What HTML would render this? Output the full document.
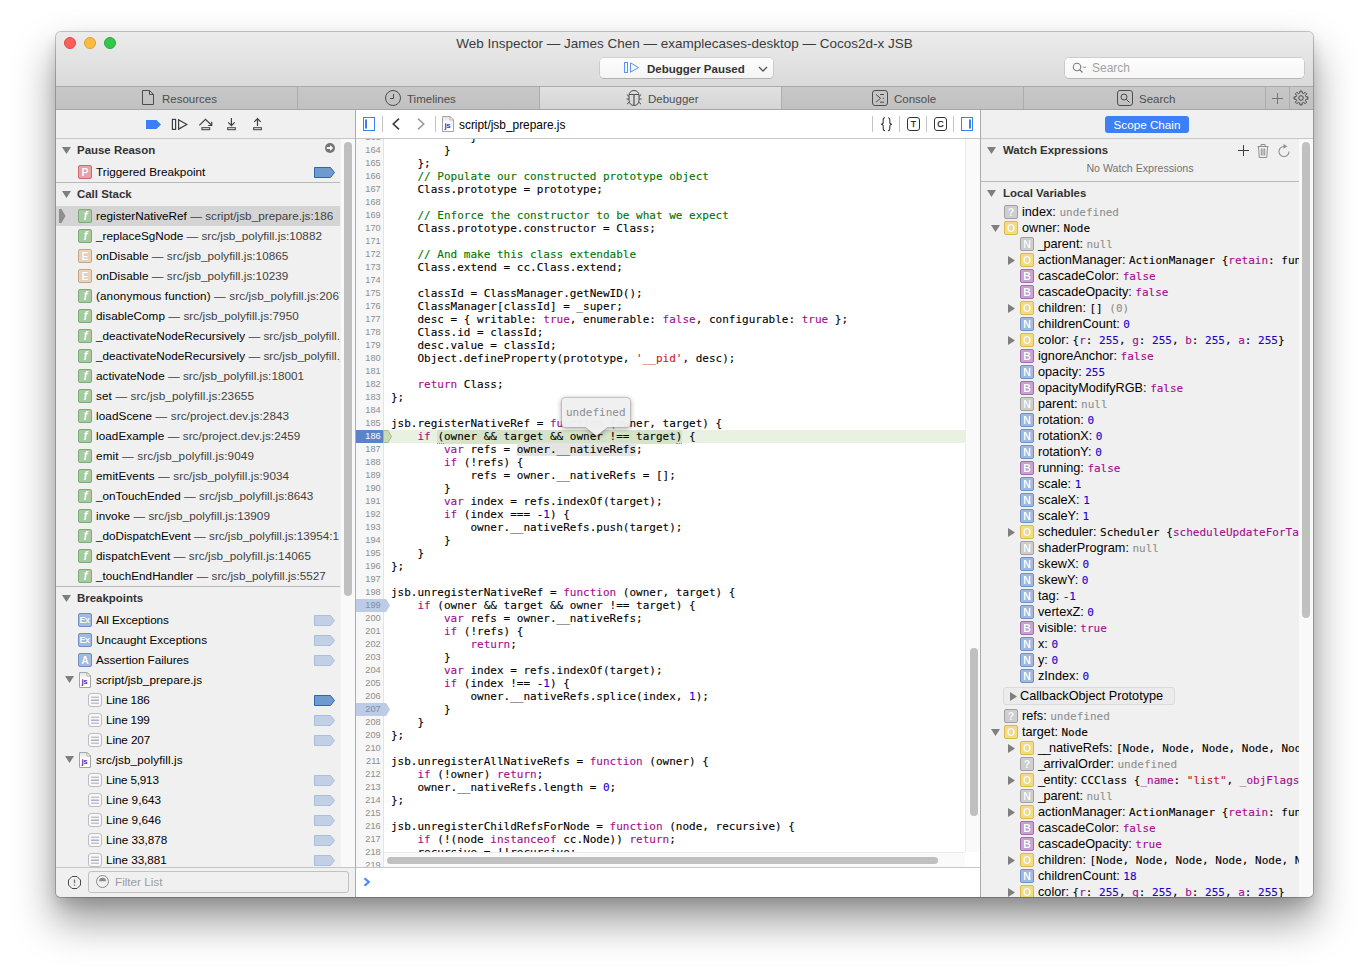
<!DOCTYPE html><html><head><meta charset="utf-8"><title>Web Inspector</title><style>
*{box-sizing:border-box;margin:0;padding:0}
html,body{width:1369px;height:977px;overflow:hidden;background:#fff}
body{font-family:"Liberation Sans",sans-serif;font-size:11.7px;color:#000;position:relative}
.mono{font-family:"DejaVu Sans Mono","Liberation Mono",monospace}
#win{position:absolute;left:56px;top:31px;width:1257px;height:866px}
#frame{position:absolute;left:0;top:1px;width:1257px;height:865px;border-radius:5px;background:#f0f0f0;
 box-shadow:0 0 0 1px rgba(0,0,0,.22),0 23px 40px 2px rgba(0,0,0,.39),0 8px 14px rgba(0,0,0,.13);}
#clip{position:absolute;left:0;top:1px;width:1257px;height:865px;border-radius:5px;overflow:hidden}
#in{position:absolute;left:0;top:-1px;width:1257px;height:866px}
.abs{position:absolute}
svg{position:absolute;overflow:visible}
/* title */
#title{left:0;top:0;width:1257px;height:55px;background:linear-gradient(#ececec,#dadada);}
#titleline{left:0;top:55px;width:1257px;height:1px;background:#a9a9a9}
.tl{position:absolute;top:6px;width:12px;height:12px;border-radius:6px}
#ttext{left:0;width:1257px;top:5px;height:16px;line-height:16px;text-align:center;font-size:13.5px;color:#3c3c3c;white-space:nowrap}
#dash{left:544px;top:27px;width:173px;height:20px;border-radius:4px;background:linear-gradient(#fdfdfd,#f4f4f4);box-shadow:0 0 0 .5px rgba(0,0,0,.18),0 1px 0 rgba(0,0,0,.12)}
#dashtext{left:591px;top:30px;font-size:11.5px;font-weight:bold;color:#333;line-height:16px;white-space:nowrap}
#searchbox{left:1009px;top:27px;width:239px;height:20px;border-radius:4px;background:linear-gradient(#fdfdfd,#f6f6f6);box-shadow:0 0 0 .5px rgba(0,0,0,.2),0 1px 0 rgba(0,0,0,.08)}
#searchph{left:1036px;top:29px;font-size:12px;color:#a3a3a3;line-height:16px}
/* tabs */
#tabs{left:0;top:56px;width:1257px;height:22px;background:linear-gradient(#c7c7c7,#c1c1c1)}
#tabline{left:0;top:78px;width:1257px;height:1px;background:#a6a6a6}
.tab{position:absolute;top:56px;height:22px;border-right:1px solid #adadad;font-size:11.5px;color:#4d4d4d;white-space:nowrap}
.tab.sel{background:linear-gradient(#e1e1e1,#d5d5d5)}
.tab span{position:absolute;top:4px;line-height:16px}
/* nav bars */
#lnav{left:0;top:79px;width:299px;height:28px;background:#f0f0f0}
#cnav{left:300px;top:79px;width:624px;height:28px;background:#fff}
#rnav{left:925px;top:79px;width:332px;height:28px;background:#f0f0f0}
#navline{left:0;top:107px;width:1257px;height:1px;background:#c6c6c6}
#vline1{left:299px;top:79px;width:1px;height:787px;background:#ababab}
#vline2{left:924px;top:79px;width:1px;height:787px;background:#ababab}
.ndiv{position:absolute;top:85px;width:1px;height:16px;background:#c4c4c4}
#crumb{left:403px;top:85.5px;font-size:11.9px;line-height:16px;color:#000;white-space:nowrap}
#scope{left:1049px;top:85px;width:84px;height:17px;border-radius:3px;background:#3d7ff6;color:#fff;font-size:11.7px;line-height:17px;text-align:center;white-space:nowrap}
/* left sidebar */
#left{left:0;top:108px;width:284px;height:728px;overflow:hidden}
#ltrack{left:285px;top:108px;width:14px;height:728px;background:#f9f9f9}
.thumb{position:absolute;border-radius:4px;background:#c0c0c0}
.sec{position:relative;height:23px;line-height:22px;font-weight:bold;font-size:11.45px;color:#333;padding-left:21px;white-space:nowrap}
.sec.bt{border-top:1px solid #b9b9b9;height:24px;line-height:23px}
#right .sec{height:22px}
#right .sec.bt{height:23px;line-height:22px}
.row{position:relative;height:20px;line-height:20px;white-space:nowrap;overflow:hidden;font-size:11.7px}
.row .t{position:absolute;left:40px;top:0;letter-spacing:0}
.row .t i{font-style:normal;color:#3f3f3f}
.row.selrow{background:#d4d4d4}
.ic{position:absolute;width:14px;height:14px;border-radius:2px;border:1px solid;text-align:center;font-size:10.5px;line-height:12px;color:#fff;font-weight:bold;overflow:hidden;text-shadow:0 0 1px rgba(0,0,0,.18)}
.row .ic{left:22px;top:3px}
.ic b{display:block}
.ic.f{background:#a6cba0;border-color:#7aad73}
.ic.f b{font-style:italic;font-size:12px;line-height:12px;text-indent:1px}
.ic.E{background:#e8d2bb;border-color:#c9a585}
.ic.P{background:#e9a3a8;border-color:#d0666f}
.ic.Ex{background:#a1badf;border-color:#6f8fc3;font-size:9px;letter-spacing:-.6px;text-indent:-1px}
.ic.A{background:#a1badf;border-color:#6f8fc3}
.ic.O{background:#f3dd83;border-color:#d9b94a}
.ic.N{background:#a1badf;border-color:#6f8fc3}
.ic.Ng{background:#cfcfcf;border-color:#9f9f9f}
.ic.B{background:#c9a3d1;border-color:#9d6ea8}
.ic.Q{background:#cfcfcf;border-color:#9f9f9f}
.bp{position:absolute;left:258px;top:5px}
#filterbar{left:0;top:836px;width:299px;height:30px;background:#f0f0f0;border-top:1px solid #c6c6c6}
#filter{left:32px;top:840px;width:261px;height:22px;border-radius:3px;background:#f0f0f0;border:1px solid #c2c2c2}
#filterph{left:59px;top:843px;font-size:11.700px;line-height:16px;color:#9d9d9d}
/* editor */
#ed{left:300px;top:108px;width:624px;height:728px;background:#fff;overflow:hidden}
#gutter{left:0;top:0;width:28px;height:728px;background:#f7f7f7;border-right:1px solid #e4e4e4}
.ln{position:absolute;left:0;width:24.7px;height:13px;line-height:13px;text-align:right;font-size:9.2px;color:#8e8e8e}
.cl{position:absolute;left:35px;height:13px;line-height:13px;font-size:11px;white-space:pre;color:#000;-webkit-text-stroke:.1px}
.dt{border-bottom:1px dotted #8c9f7c}
.k{color:#a30a8b}.c{color:#007400}.n{color:#1c00cf}.s{color:#c41a16}
#edvtrack{left:609px;top:0;width:15px;height:713px;background:#fafafa;border-left:1px solid #ececec}
#edhtrack{left:28px;top:713px;width:581px;height:15px;background:#fafafa;border-top:1px solid #ececec}
#corner{left:609px;top:713px;width:15px;height:15px;background:#fff}
#console{left:300px;top:836px;width:624px;height:30px;background:#fff;border-top:1px solid #c6c6c6}
/* right */
#right{left:925px;top:108px;width:318px;height:758px;overflow:hidden}
#rtrack{left:1243px;top:108px;width:14px;height:758px;background:#f9f9f9}
.rrow{position:relative;height:16px;line-height:16px;white-space:nowrap;font-size:12.7px}
.rrow .ic{top:1px}
.rrow .t{position:absolute;top:0}
.rrow .m{font-family:"DejaVu Sans Mono","Liberation Mono",monospace;font-size:11px;-webkit-text-stroke:.1px}
.g{color:#8f8f8f}
.rrow u{text-decoration:none;letter-spacing:-1.6px}
</style></head><body>
<div id="win"><div id="frame"></div><div id="clip"><div id="in">
<div id="title" class="abs"></div><div id="titleline" class="abs"></div>
<div class="tl" style="left:8px;background:#fc605b;border:.5px solid #de4a43"></div>
<div class="tl" style="left:28px;background:#fdbc40;border:.5px solid #de9f34"></div>
<div class="tl" style="left:48px;background:#34c84a;border:.5px solid #27aa35"></div>
<div id="ttext" class="abs">Web Inspector — James Chen — examplecases-desktop — Cocos2d-x JSB</div>
<div id="dash" class="abs"></div>
<svg width="16" height="12" viewBox="0 0 16 12" style="left:568px;top:31px"><rect x=".5" y=".5" width="3" height="10" fill="none" stroke="#5a96f7"/><path d="M6.5 .8L14.5 5.5L6.5 10.2Z" fill="none" stroke="#5a96f7"/></svg>
<div id="dashtext" class="abs">Debugger Paused</div>
<svg width="10" height="6" viewBox="0 0 10 6" style="left:702px;top:35px"><path d="M1 1L5 5L9 1" fill="none" stroke="#555" stroke-width="1.3"/></svg>
<div id="searchbox" class="abs"></div>
<svg width="16" height="12" viewBox="0 0 16 12" style="left:1016px;top:31px"><circle cx="5" cy="5" r="3.7" fill="none" stroke="#7a7a7a" stroke-width="1.1"/><path d="M7.7 7.7L10.5 10.5" stroke="#7a7a7a" stroke-width="1.2"/><path d="M11 4.5L12.5 6L14 4.5" fill="none" stroke="#7a7a7a" stroke-width="1"/></svg>
<div id="searchph" class="abs">Search</div>
<div id="tabs" class="abs"></div>
<div class="tab" style="left:0px;width:242px"><span style="left:106px">Resources</span></div>
<div class="tab" style="left:242px;width:242px"><span style="left:109px">Timelines</span></div>
<div class="tab sel" style="left:484px;width:242px"><span style="left:108px">Debugger</span></div>
<div class="tab" style="left:726px;width:242px"><span style="left:112px">Console</span></div>
<div class="tab" style="left:968px;width:242px"><span style="left:115px">Search</span></div>
<div class="tab" style="left:1210px;width:24px"></div><div class="tab" style="left:1234px;width:23px;border-right:0"></div>
<div id="tabline" class="abs"></div>
<svg width="12" height="15" viewBox="0 0 12 15" style="left:86px;top:59px"><path d="M.5 .5H7.5L11.5 4.5V14.5H.5Z" fill="none" stroke="#4d4d4d" stroke-width="1"/><path d="M7.5 .5V4.5H11.5" fill="none" stroke="#4d4d4d" stroke-width="1"/></svg>
<svg width="16" height="16" viewBox="0 0 16 16" style="left:329px;top:59px"><circle cx="8" cy="8" r="7.5" fill="none" stroke="#4d4d4d" stroke-width="1"/><path d="M8.5 4V8.5H5" fill="none" stroke="#4d4d4d" stroke-width="1"/></svg>
<svg width="16" height="18" viewBox="0 0 16 18" style="left:570px;top:58px"><g fill="none" stroke="#4d4d4d" stroke-width="1"><path d="M3 6.500C3 3.500 5 1.500 8 1.500C11 1.500 13 3.500 13 6.500V11C13 14.500 11 16.500 8 16.500C5 16.500 3 14.500 3 11ZM3.200 5.500H12.800M3 7.500L.8 5.500M13 7.500L15.200 5.500M3 10H.5M13 10H15.500M3.300 13L1 15.200M12.700 13L15 15.200"/><path d="M8 5.500V16.500" stroke="#777" stroke-width="1.700"/></g></svg>
<svg width="16" height="16" viewBox="0 0 16 16" style="left:816px;top:59px"><rect x=".5" y=".5" width="15" height="15" rx="2.500" fill="none" stroke="#4d4d4d" stroke-width="1"/><path d="M4 4.500L8.500 8.300L4 12.200M8 4.500H12M10.800 8.300H12M8 12.200H12" fill="none" stroke="#4d4d4d" stroke-width="1"/></svg>
<svg width="16" height="16" viewBox="0 0 16 16" style="left:1061px;top:59px"><rect x=".5" y=".5" width="15" height="15" rx="2.5" fill="none" stroke="#4d4d4d" stroke-width="1"/><circle cx="7" cy="7" r="3" fill="none" stroke="#4d4d4d" stroke-width="1"/><path d="M9.2 9.2L12.5 12.5" fill="none" stroke="#4d4d4d" stroke-width="1"/></svg>
<svg width="12" height="13" viewBox="0 0 12 13" style="left:1216px;top:61px"><path d="M5.500 1V12M0 6.500H11" stroke="#767676" stroke-width="1"/></svg>
<svg width="16" height="16" viewBox="-8 -8 16 16" style="left:1237.100px;top:59.200px"><g fill="none" stroke="#4a4a4a" stroke-width="1" stroke-linejoin="round"><circle r="2.300"/><path d="M-1.23 -4.95L-1.10 -6.91L1.10 -6.91L1.23 -4.95A5.10 5.10 0 0 1 2.63 -4.37L2.63 -4.37L4.11 -5.66L5.66 -4.11L4.37 -2.63A5.10 5.10 0 0 1 4.95 -1.23L4.95 -1.23L6.91 -1.10L6.91 1.10L4.95 1.23A5.10 5.10 0 0 1 4.37 2.63L4.37 2.63L5.66 4.11L4.11 5.66L2.63 4.37A5.10 5.10 0 0 1 1.23 4.95L1.23 4.95L1.10 6.91L-1.10 6.91L-1.23 4.95A5.10 5.10 0 0 1 -2.63 4.37L-2.63 4.37L-4.11 5.66L-5.66 4.11L-4.37 2.63A5.10 5.10 0 0 1 -4.95 1.23L-4.95 1.23L-6.91 1.10L-6.91 -1.10L-4.95 -1.23A5.10 5.10 0 0 1 -4.37 -2.63L-4.37 -2.63L-5.66 -4.11L-4.11 -5.66L-2.63 -4.37A5.10 5.10 0 0 1 -1.23 -4.95Z"/></g></svg>
<div id="lnav" class="abs"></div><div id="cnav" class="abs"></div><div id="rnav" class="abs"></div><div id="navline" class="abs"></div>
<svg width="299" height="28" viewBox="0 0 299 28" style="left:0;top:79px"><path d="M90 10H100.5L105 14.500L100.5 19H90Z" fill="#3a7ff6"/><g fill="none" stroke="#3f3f3f" stroke-width="1.2"><rect x="116.400" y="9.400" width="3.200" height="10"/><path d="M122.600 9.700L130.800 14.400L122.600 19.100Z"/><path d="M143.300 15.400L149.500 9.300L155.600 15.200M155.700 11.800V15.500H152.200"/><rect x="145.900" y="17.700" width="7.800" height="2" stroke-width="1"/><path d="M175.400 8V15.400M172.200 12.400L175.400 15.600L178.600 12.400"/><rect x="171.700" y="17.700" width="7.600" height="2" stroke-width="1"/><path d="M201.500 16V8.800M198.300 11.900L201.500 8.700L204.700 11.900"/><rect x="197.600" y="17.700" width="7.800" height="2" stroke-width="1"/></g></svg>
<svg width="12" height="14" viewBox="0 0 12 14" style="left:307px;top:86px"><rect x=".5" y=".5" width="11" height="13" fill="none" stroke="#3a80f6"/><path d="M3 2.500V11.500" stroke="#3a80f6" stroke-width="2"/></svg>
<div class="ndiv" style="left:326px"></div>
<svg width="8" height="12" viewBox="0 0 8 12" style="left:336px;top:87px"><path d="M7 .7L1.3 6L7 11.3" fill="none" stroke="#3b3b3b" stroke-width="1.6"/></svg>
<svg width="8" height="12" viewBox="0 0 8 12" style="left:361px;top:87px"><path d="M1 .7L6.7 6L1 11.3" fill="none" stroke="#9b9b9b" stroke-width="1.6"/></svg>
<div class="ndiv" style="left:379px"></div>
<div class="abs" style="left:0;top:83px;width:0;height:0"><svg width="13" height="16" viewBox="0 0 13 16" style="left:386px;top:2px"><defs><linearGradient id="jg" x1="0" y1="0" x2="0" y2="1"><stop offset="0" stop-color="#e2e2e2"/><stop offset=".45" stop-color="#fff"/></linearGradient></defs><path d="M.5 .5H8L11.5 4V15.5H.5Z" fill="url(#jg)" stroke="#a5a5a5" stroke-width="1"/><path d="M8 .5V4H11.5Z" fill="#fff" stroke="#a5a5a5" stroke-width=".8"/><text x="2.6" y="11.6" font-family="Liberation Sans,sans-serif" font-size="7.8" font-weight="bold" fill="#4a2cc8" letter-spacing="-.4">js</text></svg></div>
<div id="crumb" class="abs">script/jsb_prepare.js</div>
<div class="ndiv" style="left:816px"></div>
<svg width="13" height="16" viewBox="0 0 13 16" style="left:824px;top:85px"><path d="M5 1.700C3.400 1.700 3.200 2.500 3.200 3.700V6.200C3.200 7.500 2.400 8.200 1 8.200C2.400 8.200 3.200 8.900 3.200 10.200V12.700C3.200 13.900 3.400 14.700 5 14.700M8 1.700C9.600 1.700 9.800 2.500 9.800 3.700V6.200C9.800 7.500 10.600 8.200 12 8.200C10.600 8.200 9.800 8.900 9.800 10.200V12.700C9.800 13.900 9.600 14.700 8 14.700" fill="none" stroke="#383838" stroke-width="1.100"/></svg>
<div class="ndiv" style="left:843px"></div>
<svg width="13" height="14" viewBox="0 0 13 14" style="left:851px;top:86px"><rect x=".5" y=".5" width="12" height="13" rx="2.500" fill="none" stroke="#333"/><text x="6.500" y="10.200" text-anchor="middle" font-size="8.800" font-family="Liberation Sans,sans-serif" fill="#222" stroke="#222" stroke-width=".25">T</text></svg>
<div class="ndiv" style="left:870px"></div>
<svg width="13" height="14" viewBox="0 0 13 14" style="left:878px;top:86px"><rect x=".5" y=".5" width="12" height="13" rx="2.500" fill="none" stroke="#333"/><text x="6.500" y="10.200" text-anchor="middle" font-size="8.800" font-family="Liberation Sans,sans-serif" fill="#222" stroke="#222" stroke-width=".25">C</text></svg>
<div class="ndiv" style="left:897px"></div>
<svg width="12" height="14" viewBox="0 0 12 14" style="left:905px;top:86px"><rect x=".5" y=".5" width="11" height="13" fill="none" stroke="#3a80f6"/><path d="M9 2.500V11.500" stroke="#3a80f6" stroke-width="2"/></svg>
<div id="scope" class="abs">Scope Chain</div>
<div id="left" class="abs"><div class="sec"><svg width="9" height="7" viewBox="0 0 9 7" style="left:6px;top:8px"><path d="M0 0H9L4.5 7Z" fill="#7e7e7e"/></svg>Pause Reason<svg width="10" height="10" viewBox="0 0 10 10" style="left:269px;top:4.300px"><circle cx="5" cy="5" r="5" fill="#737373"/><path d="M1.800 4H5V2L8.300 5L5 8V6H1.800Z" fill="#f4f4f4"/></svg></div>
<div class="row"><span class="ic P"><b>P</b></span><span class="t" style="letter-spacing:0.034px;">Triggered Breakpoint</span><svg class="bp" width="21" height="11" viewBox="0 0 21 11"><path d="M.5 .5H16.500L20.500 5.500L16.500 10.500H.5Z" fill="#6e9bcf" stroke="#2f66b0" stroke-width="1"/></svg></div>
<div class="sec bt"><svg width="9" height="7" viewBox="0 0 9 7" style="left:6px;top:8px"><path d="M0 0H9L4.5 7Z" fill="#7e7e7e"/></svg>Call Stack</div>
<div class="row selrow"><svg width="7" height="14" viewBox="0 0 7 14" style="left:3px;top:3px"><path d="M0 0H2.5L6.5 7L2.5 14H0Z" fill="#8e8e8e"/></svg><span class="ic f"><b>f</b></span><span class="t" style="letter-spacing:0.035px;">registerNativeRef<i> — script/jsb_prepare.js:186</i></span></div>
<div class="row"><span class="ic f"><b>f</b></span><span class="t" style="letter-spacing:0.011px;">_replaceSgNode<i> — src/jsb_polyfill.js:10882</i></span></div>
<div class="row"><span class="ic E"><b>E</b></span><span class="t" style="letter-spacing:0.055px;">onDisable<i> — src/jsb_polyfill.js:10865</i></span></div>
<div class="row"><span class="ic E"><b>E</b></span><span class="t" style="letter-spacing:0.055px;">onDisable<i> — src/jsb_polyfill.js:10239</i></span></div>
<div class="row"><span class="ic f"><b>f</b></span><span class="t" style="letter-spacing:0.115px;">(anonymous function)<i> — src/jsb_polyfill.js:20671</i></span></div>
<div class="row"><span class="ic f"><b>f</b></span><span class="t" style="letter-spacing:0.071px;">disableComp<i> — src/jsb_polyfill.js:7950</i></span></div>
<div class="row"><span class="ic f"><b>f</b></span><span class="t" style="letter-spacing:0.037px;">_deactivateNodeRecursively<i> — src/jsb_polyfill.js:18040</i></span></div>
<div class="row"><span class="ic f"><b>f</b></span><span class="t" style="letter-spacing:0.037px;">_deactivateNodeRecursively<i> — src/jsb_polyfill.js:18046</i></span></div>
<div class="row"><span class="ic f"><b>f</b></span><span class="t" style="letter-spacing:0.037px;">activateNode<i> — src/jsb_polyfill.js:18001</i></span></div>
<div class="row"><span class="ic f"><b>f</b></span><span class="t" style="letter-spacing:0.133px;">set<i> — src/jsb_polyfill.js:23655</i></span></div>
<div class="row"><span class="ic f"><b>f</b></span><span class="t" style="letter-spacing:0.106px;">loadScene<i> — src/project.dev.js:2843</i></span></div>
<div class="row"><span class="ic f"><b>f</b></span><span class="t" style="letter-spacing:0.070px;">loadExample<i> — src/project.dev.js:2459</i></span></div>
<div class="row"><span class="ic f"><b>f</b></span><span class="t" style="letter-spacing:0.133px;">emit<i> — src/jsb_polyfill.js:9049</i></span></div>
<div class="row"><span class="ic f"><b>f</b></span><span class="t" style="letter-spacing:0.095px;">emitEvents<i> — src/jsb_polyfill.js:9034</i></span></div>
<div class="row"><span class="ic f"><b>f</b></span><span class="t" style="letter-spacing:0.026px;">_onTouchEnded<i> — src/jsb_polyfill.js:8643</i></span></div>
<div class="row"><span class="ic f"><b>f</b></span><span class="t" style="letter-spacing:0.054px;">invoke<i> — src/jsb_polyfill.js:13909</i></span></div>
<div class="row"><span class="ic f"><b>f</b></span><span class="t">_doDispatchEvent<i> — src/jsb_polyfill.js:13954:1</i></span></div>
<div class="row"><span class="ic f"><b>f</b></span><span class="t" style="letter-spacing:0.078px;">dispatchEvent<i> — src/jsb_polyfill.js:14065</i></span></div>
<div class="row"><span class="ic f"><b>f</b></span><span class="t" style="letter-spacing:0.028px;">_touchEndHandler<i> — src/jsb_polyfill.js:5527</i></span></div>
<div class="sec bt"><svg width="9" height="7" viewBox="0 0 9 7" style="left:6px;top:8px"><path d="M0 0H9L4.5 7Z" fill="#7e7e7e"/></svg>Breakpoints</div>
<div class="row"><span class="ic Ex"><b>Ex</b></span><span class="t" style="letter-spacing:-0.037px;">All Exceptions</span><svg class="bp" width="21" height="11" viewBox="0 0 21 11"><path d="M.5 .5H16.500L20.500 5.500L16.500 10.500H.5Z" fill="#c2d0e3" stroke="#a8bedd" stroke-width="1"/></svg></div>
<div class="row"><span class="ic Ex"><b>Ex</b></span><span class="t" style="letter-spacing:0.029px;">Uncaught Exceptions</span><svg class="bp" width="21" height="11" viewBox="0 0 21 11"><path d="M.5 .5H16.500L20.500 5.500L16.500 10.500H.5Z" fill="#c2d0e3" stroke="#a8bedd" stroke-width="1"/></svg></div>
<div class="row"><span class="ic A"><b>A</b></span><span class="t" style="letter-spacing:-0.036px;">Assertion Failures</span><svg class="bp" width="21" height="11" viewBox="0 0 21 11"><path d="M.5 .5H16.500L20.500 5.500L16.500 10.500H.5Z" fill="#c2d0e3" stroke="#a8bedd" stroke-width="1"/></svg></div>
<div class="row"><svg width="9" height="7" viewBox="0 0 9 7" style="left:9px;top:6px"><path d="M0 0H9L4.5 7Z" fill="#7e7e7e"/></svg><svg width="13" height="16" viewBox="0 0 13 16" style="left:23px;top:2px"><defs><linearGradient id="jg" x1="0" y1="0" x2="0" y2="1"><stop offset="0" stop-color="#e2e2e2"/><stop offset=".45" stop-color="#fff"/></linearGradient></defs><path d="M.5 .5H8L11.5 4V15.5H.5Z" fill="url(#jg)" stroke="#a5a5a5" stroke-width="1"/><path d="M8 .5V4H11.5Z" fill="#fff" stroke="#a5a5a5" stroke-width=".8"/><text x="2.6" y="11.6" font-family="Liberation Sans,sans-serif" font-size="7.8" font-weight="bold" fill="#4a2cc8" letter-spacing="-.4">js</text></svg><span class="t" style="letter-spacing:0.076px;">script/jsb_prepare.js</span></div>
<div class="row"><svg width="14" height="14" viewBox="0 0 14 14" style="left:32px;top:3px"><rect x=".5" y=".5" width="13" height="13" rx="2.5" fill="#f7f7f7" stroke="#bdbdbd"/><path d="M3 4.25H11M3 10.25H11" stroke="#c6c6c6" stroke-width="1.5"/><path d="M3 7.25H11" stroke="#aaaadc" stroke-width="1.5"/></svg><span class="t" style="left:50px;letter-spacing:-0.157px;">Line 186</span><svg class="bp" width="21" height="11" viewBox="0 0 21 11"><path d="M.5 .5H16.500L20.500 5.500L16.500 10.500H.5Z" fill="#6e9bcf" stroke="#2f66b0" stroke-width="1"/></svg></div>
<div class="row"><svg width="14" height="14" viewBox="0 0 14 14" style="left:32px;top:3px"><rect x=".5" y=".5" width="13" height="13" rx="2.5" fill="#f7f7f7" stroke="#bdbdbd"/><path d="M3 4.25H11M3 10.25H11" stroke="#c6c6c6" stroke-width="1.5"/><path d="M3 7.25H11" stroke="#aaaadc" stroke-width="1.5"/></svg><span class="t" style="left:50px;letter-spacing:-0.157px;">Line 199</span><svg class="bp" width="21" height="11" viewBox="0 0 21 11"><path d="M.5 .5H16.500L20.500 5.500L16.500 10.500H.5Z" fill="#c2d0e3" stroke="#a8bedd" stroke-width="1"/></svg></div>
<div class="row"><svg width="14" height="14" viewBox="0 0 14 14" style="left:32px;top:3px"><rect x=".5" y=".5" width="13" height="13" rx="2.5" fill="#f7f7f7" stroke="#bdbdbd"/><path d="M3 4.25H11M3 10.25H11" stroke="#c6c6c6" stroke-width="1.5"/><path d="M3 7.25H11" stroke="#aaaadc" stroke-width="1.5"/></svg><span class="t" style="left:50px;letter-spacing:-0.082px;">Line 207</span><svg class="bp" width="21" height="11" viewBox="0 0 21 11"><path d="M.5 .5H16.500L20.500 5.500L16.500 10.500H.5Z" fill="#c2d0e3" stroke="#a8bedd" stroke-width="1"/></svg></div>
<div class="row"><svg width="9" height="7" viewBox="0 0 9 7" style="left:9px;top:6px"><path d="M0 0H9L4.5 7Z" fill="#7e7e7e"/></svg><svg width="13" height="16" viewBox="0 0 13 16" style="left:23px;top:2px"><defs><linearGradient id="jg" x1="0" y1="0" x2="0" y2="1"><stop offset="0" stop-color="#e2e2e2"/><stop offset=".45" stop-color="#fff"/></linearGradient></defs><path d="M.5 .5H8L11.5 4V15.5H.5Z" fill="url(#jg)" stroke="#a5a5a5" stroke-width="1"/><path d="M8 .5V4H11.5Z" fill="#fff" stroke="#a5a5a5" stroke-width=".8"/><text x="2.6" y="11.6" font-family="Liberation Sans,sans-serif" font-size="7.8" font-weight="bold" fill="#4a2cc8" letter-spacing="-.4">js</text></svg><span class="t" style="letter-spacing:0.119px;">src/jsb_polyfill.js</span></div>
<div class="row"><svg width="14" height="14" viewBox="0 0 14 14" style="left:32px;top:3px"><rect x=".5" y=".5" width="13" height="13" rx="2.5" fill="#f7f7f7" stroke="#bdbdbd"/><path d="M3 4.25H11M3 10.25H11" stroke="#c6c6c6" stroke-width="1.5"/><path d="M3 7.25H11" stroke="#aaaadc" stroke-width="1.5"/></svg><span class="t" style="left:50px;letter-spacing:-0.189px;">Line 5,913</span><svg class="bp" width="21" height="11" viewBox="0 0 21 11"><path d="M.5 .5H16.500L20.500 5.500L16.500 10.500H.5Z" fill="#c2d0e3" stroke="#a8bedd" stroke-width="1"/></svg></div>
<div class="row"><svg width="14" height="14" viewBox="0 0 14 14" style="left:32px;top:3px"><rect x=".5" y=".5" width="13" height="13" rx="2.5" fill="#f7f7f7" stroke="#bdbdbd"/><path d="M3 4.25H11M3 10.25H11" stroke="#c6c6c6" stroke-width="1.5"/><path d="M3 7.25H11" stroke="#aaaadc" stroke-width="1.5"/></svg><span class="t" style="left:50px;letter-spacing:0.051px;">Line 9,643</span><svg class="bp" width="21" height="11" viewBox="0 0 21 11"><path d="M.5 .5H16.500L20.500 5.500L16.500 10.500H.5Z" fill="#c2d0e3" stroke="#a8bedd" stroke-width="1"/></svg></div>
<div class="row"><svg width="14" height="14" viewBox="0 0 14 14" style="left:32px;top:3px"><rect x=".5" y=".5" width="13" height="13" rx="2.5" fill="#f7f7f7" stroke="#bdbdbd"/><path d="M3 4.25H11M3 10.25H11" stroke="#c6c6c6" stroke-width="1.5"/><path d="M3 7.25H11" stroke="#aaaadc" stroke-width="1.5"/></svg><span class="t" style="left:50px;letter-spacing:0.051px;">Line 9,646</span><svg class="bp" width="21" height="11" viewBox="0 0 21 11"><path d="M.5 .5H16.500L20.500 5.500L16.500 10.500H.5Z" fill="#c2d0e3" stroke="#a8bedd" stroke-width="1"/></svg></div>
<div class="row"><svg width="14" height="14" viewBox="0 0 14 14" style="left:32px;top:3px"><rect x=".5" y=".5" width="13" height="13" rx="2.5" fill="#f7f7f7" stroke="#bdbdbd"/><path d="M3 4.25H11M3 10.25H11" stroke="#c6c6c6" stroke-width="1.5"/><path d="M3 7.25H11" stroke="#aaaadc" stroke-width="1.5"/></svg><span class="t" style="left:50px;letter-spacing:0.019px;">Line 33,878</span><svg class="bp" width="21" height="11" viewBox="0 0 21 11"><path d="M.5 .5H16.500L20.500 5.500L16.500 10.500H.5Z" fill="#c2d0e3" stroke="#a8bedd" stroke-width="1"/></svg></div>
<div class="row"><svg width="14" height="14" viewBox="0 0 14 14" style="left:32px;top:3px"><rect x=".5" y=".5" width="13" height="13" rx="2.5" fill="#f7f7f7" stroke="#bdbdbd"/><path d="M3 4.25H11M3 10.25H11" stroke="#c6c6c6" stroke-width="1.5"/><path d="M3 7.25H11" stroke="#aaaadc" stroke-width="1.5"/></svg><span class="t" style="left:50px;letter-spacing:-0.036px;">Line 33,881</span><svg class="bp" width="21" height="11" viewBox="0 0 21 11"><path d="M.5 .5H16.500L20.500 5.500L16.500 10.500H.5Z" fill="#c2d0e3" stroke="#a8bedd" stroke-width="1"/></svg></div></div>
<div id="ltrack" class="abs"><div class="thumb" style="left:3px;top:3px;width:8px;height:454px"></div></div>
<div id="filterbar" class="abs"></div><div id="filter" class="abs"></div>
<svg width="13" height="13" viewBox="0 0 13 13" style="left:11.500px;top:844.500px"><path d="M4 .5H9L12.500 4V9L9 12.500H4L.5 9V4Z" fill="none" stroke="#4a4a4a"/><path d="M6.500 3.500V7.300M6.500 8.600V9.800" stroke="#777" stroke-width="1.300"/></svg>
<svg width="13" height="13" viewBox="0 0 13 13" style="left:40px;top:844px"><circle cx="6.5" cy="6.5" r="6" fill="none" stroke="#8a8a8a"/><path d="M3 6.2A3.5 3.5 0 0 1 10 6.2Z" fill="#8a8a8a"/></svg>
<div id="filterph" class="abs">Filter List</div>
<div id="ed" class="abs">
<div id="gutter" class="abs"></div>
<div class="abs" style="left:28px;top:291px;width:581px;height:13px;background:#e9f1e3"></div>
<div class="ln" style="top:-8px">163</div>
<div class="cl mono" style="top:-8px">            }</div>
<div class="ln" style="top:5px">164</div>
<div class="cl mono" style="top:5px">        }</div>
<div class="ln" style="top:18px">165</div>
<div class="cl mono" style="top:18px">    };</div>
<div class="ln" style="top:31px">166</div>
<div class="cl mono" style="top:31px">    <span class="c">// Populate our constructed prototype object</span></div>
<div class="ln" style="top:44px">167</div>
<div class="cl mono" style="top:44px">    Class.prototype = prototype;</div>
<div class="ln" style="top:57px">168</div>
<div class="cl mono" style="top:57px"></div>
<div class="ln" style="top:70px">169</div>
<div class="cl mono" style="top:70px">    <span class="c">// Enforce the constructor to be what we expect</span></div>
<div class="ln" style="top:83px">170</div>
<div class="cl mono" style="top:83px">    Class.prototype.constructor = Class;</div>
<div class="ln" style="top:96px">171</div>
<div class="cl mono" style="top:96px"></div>
<div class="ln" style="top:109px">172</div>
<div class="cl mono" style="top:109px">    <span class="c">// And make this class extendable</span></div>
<div class="ln" style="top:122px">173</div>
<div class="cl mono" style="top:122px">    Class.extend = cc.Class.extend;</div>
<div class="ln" style="top:135px">174</div>
<div class="cl mono" style="top:135px"></div>
<div class="ln" style="top:148px">175</div>
<div class="cl mono" style="top:148px">    classId = ClassManager.getNewID();</div>
<div class="ln" style="top:161px">176</div>
<div class="cl mono" style="top:161px">    ClassManager[classId] = _super;</div>
<div class="ln" style="top:174px">177</div>
<div class="cl mono" style="top:174px">    desc = { writable: <span class="k">true</span>, enumerable: <span class="k">false</span>, configurable: <span class="k">true</span> };</div>
<div class="ln" style="top:187px">178</div>
<div class="cl mono" style="top:187px">    Class.id = classId;</div>
<div class="ln" style="top:200px">179</div>
<div class="cl mono" style="top:200px">    desc.value = classId;</div>
<div class="ln" style="top:213px">180</div>
<div class="cl mono" style="top:213px">    Object.defineProperty(prototype, <span class="s">&#x27;__pid&#x27;</span>, desc);</div>
<div class="ln" style="top:226px">181</div>
<div class="cl mono" style="top:226px"></div>
<div class="ln" style="top:239px">182</div>
<div class="cl mono" style="top:239px">    <span class="k">return</span> Class;</div>
<div class="ln" style="top:252px">183</div>
<div class="cl mono" style="top:252px">};</div>
<div class="ln" style="top:265px">184</div>
<div class="cl mono" style="top:265px"></div>
<div class="ln" style="top:278px">185</div>
<div class="cl mono" style="top:278px">jsb.registerNativeRef = <span class="k">function</span> (owner, target) {</div>
<svg width="36" height="13" viewBox="0 0 36 13" style="left:0;top:291px"><path d="M0 0H27V13H0Z" fill="#5b84c8"/><path d="M27.5 .5H32L35.5 6.5L32 12.5H27.5Z" fill="#c9dcb6" stroke="#a2bb88" stroke-width="1"/></svg>
<div class="ln" style="top:291px;color:#fff">186</div>
<div class="cl mono" style="top:291px">    <span class="k">if</span> <span style="background:#d5e3c8;box-shadow:0 1px 0 #d5e3c8"><span class="dt">(</span>owner &amp;&amp; target &amp;&amp; owner !== target<span class="dt">)</span></span> {</div>
<div class="ln" style="top:304px">187</div>
<div class="cl mono" style="top:304px">        <span class="k">var</span> refs = <span style="background:#e4e4e4">owner.__nativeRefs</span>;</div>
<div class="ln" style="top:317px">188</div>
<div class="cl mono" style="top:317px">        <span class="k">if</span> (!refs) {</div>
<div class="ln" style="top:330px">189</div>
<div class="cl mono" style="top:330px">            refs = owner.__nativeRefs = [];</div>
<div class="ln" style="top:343px">190</div>
<div class="cl mono" style="top:343px">        }</div>
<div class="ln" style="top:356px">191</div>
<div class="cl mono" style="top:356px">        <span class="k">var</span> index = refs.indexOf(target);</div>
<div class="ln" style="top:369px">192</div>
<div class="cl mono" style="top:369px">        <span class="k">if</span> (index === -<span class="n">1</span>) {</div>
<div class="ln" style="top:382px">193</div>
<div class="cl mono" style="top:382px">            owner.__nativeRefs.push(target);</div>
<div class="ln" style="top:395px">194</div>
<div class="cl mono" style="top:395px">        }</div>
<div class="ln" style="top:408px">195</div>
<div class="cl mono" style="top:408px">    }</div>
<div class="ln" style="top:421px">196</div>
<div class="cl mono" style="top:421px">};</div>
<div class="ln" style="top:434px">197</div>
<div class="cl mono" style="top:434px"></div>
<div class="ln" style="top:447px">198</div>
<div class="cl mono" style="top:447px">jsb.unregisterNativeRef = <span class="k">function</span> (owner, target) {</div>
<svg width="36" height="13" viewBox="0 0 36 13" style="left:0;top:460px"><path d="M0 0H30L34 6.5L30 13H0Z" fill="#bccbe6"/></svg>
<div class="ln" style="top:460px;color:#7f8ea8">199</div>
<div class="cl mono" style="top:460px">    <span class="k">if</span> (owner &amp;&amp; target &amp;&amp; owner !== target) {</div>
<div class="ln" style="top:473px">200</div>
<div class="cl mono" style="top:473px">        <span class="k">var</span> refs = owner.__nativeRefs;</div>
<div class="ln" style="top:486px">201</div>
<div class="cl mono" style="top:486px">        <span class="k">if</span> (!refs) {</div>
<div class="ln" style="top:499px">202</div>
<div class="cl mono" style="top:499px">            <span class="k">return</span>;</div>
<div class="ln" style="top:512px">203</div>
<div class="cl mono" style="top:512px">        }</div>
<div class="ln" style="top:525px">204</div>
<div class="cl mono" style="top:525px">        <span class="k">var</span> index = refs.indexOf(target);</div>
<div class="ln" style="top:538px">205</div>
<div class="cl mono" style="top:538px">        <span class="k">if</span> (index !== -<span class="n">1</span>) {</div>
<div class="ln" style="top:551px">206</div>
<div class="cl mono" style="top:551px">            owner.__nativeRefs.splice(index, <span class="n">1</span>);</div>
<svg width="36" height="13" viewBox="0 0 36 13" style="left:0;top:564px"><path d="M0 0H30L34 6.5L30 13H0Z" fill="#bccbe6"/></svg>
<div class="ln" style="top:564px;color:#7f8ea8">207</div>
<div class="cl mono" style="top:564px">        }</div>
<div class="ln" style="top:577px">208</div>
<div class="cl mono" style="top:577px">    }</div>
<div class="ln" style="top:590px">209</div>
<div class="cl mono" style="top:590px">};</div>
<div class="ln" style="top:603px">210</div>
<div class="cl mono" style="top:603px"></div>
<div class="ln" style="top:616px">211</div>
<div class="cl mono" style="top:616px">jsb.unregisterAllNativeRefs = <span class="k">function</span> (owner) {</div>
<div class="ln" style="top:629px">212</div>
<div class="cl mono" style="top:629px">    <span class="k">if</span> (!owner) <span class="k">return</span>;</div>
<div class="ln" style="top:642px">213</div>
<div class="cl mono" style="top:642px">    owner.__nativeRefs.length = <span class="n">0</span>;</div>
<div class="ln" style="top:655px">214</div>
<div class="cl mono" style="top:655px">};</div>
<div class="ln" style="top:668px">215</div>
<div class="cl mono" style="top:668px"></div>
<div class="ln" style="top:681px">216</div>
<div class="cl mono" style="top:681px">jsb.unregisterChildRefsForNode = <span class="k">function</span> (node, recursive) {</div>
<div class="ln" style="top:694px">217</div>
<div class="cl mono" style="top:694px">    <span class="k">if</span> (!(node <span class="k">instanceof</span> cc.Node)) <span class="k">return</span>;</div>
<div class="ln" style="top:707px">218</div>
<div class="cl mono" style="top:707px">    recursive = !!recursive;</div>
<div class="ln" style="top:720px">219</div>
<div class="cl mono" style="top:720px"></div>
<div id="edvtrack" class="abs"><div class="thumb" style="left:4px;top:509px;width:8px;height:168px"></div></div>
<div id="edhtrack" class="abs"><div class="thumb" style="left:3px;top:3.500px;width:551px;height:7.500px"></div></div>
<div id="corner" class="abs"></div>
<svg width="624" height="728" viewBox="0 0 624 728" style="left:0;top:0;filter:drop-shadow(0 1px 2.5px rgba(0,0,0,.38))"><path d="M209.500 258.500H270.500a4 4 0 0 1 4 4V284.500a4 4 0 0 1 -4 4H251.500L240.500 297L229.500 288.500H209.500a4 4 0 0 1 -4 -4V262.500a4 4 0 0 1 4 -4Z" fill="rgba(243,243,243,.96)" stroke="rgba(0,0,0,.16)" stroke-width="1"/></svg>
<div class="abs mono" style="left:210px;top:266.500px;font-size:11px;line-height:13px;color:#8c8c93">undefined</div>
</div>
<div id="console" class="abs"></div>
<svg width="8" height="10" viewBox="0 0 8 10" style="left:307px;top:846px"><path d="M1.500 1.200L5.800 5L1.500 8.800" fill="none" stroke="#4a8af7" stroke-width="2.200"/></svg>
<div id="right" class="abs"><div class="sec" style="padding-left:22px"><svg width="9" height="7" viewBox="0 0 9 7" style="left:6px;top:8px"><path d="M0 0H9L4.5 7Z" fill="#7e7e7e"/></svg>Watch Expressions</div>
<div style="height:20px;line-height:14px;text-align:center;color:#747474;font-size:10.65px;padding-left:0">No Watch Expressions</div>
<div class="sec bt" style="padding-left:22px"><svg width="9" height="7" viewBox="0 0 9 7" style="left:6px;top:8px"><path d="M0 0H9L4.5 7Z" fill="#7e7e7e"/></svg>Local Variables</div>
<div class="rrow"><span class="ic Q" style="left:23px"><b>?</b></span><span class="t" style="left:41px">index: <span class="m"><span class="g">undefined</span></span></span></div>
<div class="rrow"><svg width="9" height="7" viewBox="0 0 9 7" style="left:10px;top:5px"><path d="M0 0H9L4.5 7Z" fill="#7e7e7e"/></svg><span class="ic O" style="left:23px"><b>O</b></span><span class="t" style="left:41px">owner: <span class="m">Node</span></span></div>
<div class="rrow"><span class="ic Ng" style="left:39px"><b>N</b></span><span class="t" style="left:57px"><u>_</u>parent: <span class="m"><span class="g">null</span></span></span></div>
<div class="rrow"><svg width="7" height="9" viewBox="0 0 7 9" style="left:27px;top:4px"><path d="M0 0V9L7 4.5Z" fill="#7e7e7e"/></svg><span class="ic O" style="left:39px"><b>O</b></span><span class="t" style="left:57px">actionManager: <span class="m">ActionManager {<span class="k">retain</span>: function, <span class="k">release</span>: function}</span></span></div>
<div class="rrow"><span class="ic B" style="left:39px"><b>B</b></span><span class="t" style="left:57px">cascadeColor: <span class="m"><span class="k">false</span></span></span></div>
<div class="rrow"><span class="ic B" style="left:39px"><b>B</b></span><span class="t" style="left:57px">cascadeOpacity: <span class="m"><span class="k">false</span></span></span></div>
<div class="rrow"><svg width="7" height="9" viewBox="0 0 7 9" style="left:27px;top:4px"><path d="M0 0V9L7 4.5Z" fill="#7e7e7e"/></svg><span class="ic O" style="left:39px"><b>O</b></span><span class="t" style="left:57px">children: <span class="m">[] <span class="g">(0)</span></span></span></div>
<div class="rrow"><span class="ic N" style="left:39px"><b>N</b></span><span class="t" style="left:57px">childrenCount: <span class="m"><span class="n">0</span></span></span></div>
<div class="rrow"><svg width="7" height="9" viewBox="0 0 7 9" style="left:27px;top:4px"><path d="M0 0V9L7 4.5Z" fill="#7e7e7e"/></svg><span class="ic O" style="left:39px"><b>O</b></span><span class="t" style="left:57px">color: <span class="m">{<span class="k">r</span>: <span class="n">255</span>, <span class="k">g</span>: <span class="n">255</span>, <span class="k">b</span>: <span class="n">255</span>, <span class="k">a</span>: <span class="n">255</span>}</span></span></div>
<div class="rrow"><span class="ic B" style="left:39px"><b>B</b></span><span class="t" style="left:57px">ignoreAnchor: <span class="m"><span class="k">false</span></span></span></div>
<div class="rrow"><span class="ic N" style="left:39px"><b>N</b></span><span class="t" style="left:57px">opacity: <span class="m"><span class="n">255</span></span></span></div>
<div class="rrow"><span class="ic B" style="left:39px"><b>B</b></span><span class="t" style="left:57px">opacityModifyRGB: <span class="m"><span class="k">false</span></span></span></div>
<div class="rrow"><span class="ic Ng" style="left:39px"><b>N</b></span><span class="t" style="left:57px">parent: <span class="m"><span class="g">null</span></span></span></div>
<div class="rrow"><span class="ic N" style="left:39px"><b>N</b></span><span class="t" style="left:57px">rotation: <span class="m"><span class="n">0</span></span></span></div>
<div class="rrow"><span class="ic N" style="left:39px"><b>N</b></span><span class="t" style="left:57px">rotationX: <span class="m"><span class="n">0</span></span></span></div>
<div class="rrow"><span class="ic N" style="left:39px"><b>N</b></span><span class="t" style="left:57px">rotationY: <span class="m"><span class="n">0</span></span></span></div>
<div class="rrow"><span class="ic B" style="left:39px"><b>B</b></span><span class="t" style="left:57px">running: <span class="m"><span class="k">false</span></span></span></div>
<div class="rrow"><span class="ic N" style="left:39px"><b>N</b></span><span class="t" style="left:57px">scale: <span class="m"><span class="n">1</span></span></span></div>
<div class="rrow"><span class="ic N" style="left:39px"><b>N</b></span><span class="t" style="left:57px">scaleX: <span class="m"><span class="n">1</span></span></span></div>
<div class="rrow"><span class="ic N" style="left:39px"><b>N</b></span><span class="t" style="left:57px">scaleY: <span class="m"><span class="n">1</span></span></span></div>
<div class="rrow"><svg width="7" height="9" viewBox="0 0 7 9" style="left:27px;top:4px"><path d="M0 0V9L7 4.5Z" fill="#7e7e7e"/></svg><span class="ic O" style="left:39px"><b>O</b></span><span class="t" style="left:57px">scheduler: <span class="m">Scheduler {<span class="k">scheduleUpdateForTarget</span>: function}</span></span></div>
<div class="rrow"><span class="ic Ng" style="left:39px"><b>N</b></span><span class="t" style="left:57px">shaderProgram: <span class="m"><span class="g">null</span></span></span></div>
<div class="rrow"><span class="ic N" style="left:39px"><b>N</b></span><span class="t" style="left:57px">skewX: <span class="m"><span class="n">0</span></span></span></div>
<div class="rrow"><span class="ic N" style="left:39px"><b>N</b></span><span class="t" style="left:57px">skewY: <span class="m"><span class="n">0</span></span></span></div>
<div class="rrow"><span class="ic N" style="left:39px"><b>N</b></span><span class="t" style="left:57px">tag: <span class="m"><span class="n">-1</span></span></span></div>
<div class="rrow"><span class="ic N" style="left:39px"><b>N</b></span><span class="t" style="left:57px">vertexZ: <span class="m"><span class="n">0</span></span></span></div>
<div class="rrow"><span class="ic B" style="left:39px"><b>B</b></span><span class="t" style="left:57px">visible: <span class="m"><span class="k">true</span></span></span></div>
<div class="rrow"><span class="ic N" style="left:39px"><b>N</b></span><span class="t" style="left:57px">x: <span class="m"><span class="n">0</span></span></span></div>
<div class="rrow"><span class="ic N" style="left:39px"><b>N</b></span><span class="t" style="left:57px">y: <span class="m"><span class="n">0</span></span></span></div>
<div class="rrow"><span class="ic N" style="left:39px"><b>N</b></span><span class="t" style="left:57px">zIndex: <span class="m"><span class="n">0</span></span></span></div>
<div style="position:relative;height:24px"><div style="position:absolute;left:22px;top:3px;width:172px;height:18px;border:1px solid #dadada;border-radius:3px;background:#ebebeb"></div><svg width="7" height="9" viewBox="0 0 7 9" style="left:29px;top:7.5px"><path d="M0 0V9L7 4.5Z" fill="#7e7e7e"/></svg><span style="position:absolute;left:39px;top:3px;line-height:18px;font-size:12.7px">CallbackObject Prototype</span></div>
<div class="rrow"><span class="ic Q" style="left:23px"><b>?</b></span><span class="t" style="left:41px">refs: <span class="m"><span class="g">undefined</span></span></span></div>
<div class="rrow"><svg width="9" height="7" viewBox="0 0 9 7" style="left:10px;top:5px"><path d="M0 0H9L4.5 7Z" fill="#7e7e7e"/></svg><span class="ic O" style="left:23px"><b>O</b></span><span class="t" style="left:41px">target: <span class="m">Node</span></span></div>
<div class="rrow"><svg width="7" height="9" viewBox="0 0 7 9" style="left:27px;top:4px"><path d="M0 0V9L7 4.5Z" fill="#7e7e7e"/></svg><span class="ic O" style="left:39px"><b>O</b></span><span class="t" style="left:57px"><u>_</u><u>_</u>nativeRefs: <span class="m">[Node, Node, Node, Node, Node, Node, Node]</span></span></div>
<div class="rrow"><span class="ic Q" style="left:39px"><b>?</b></span><span class="t" style="left:57px"><u>_</u>arrivalOrder: <span class="m"><span class="g">undefined</span></span></span></div>
<div class="rrow"><svg width="7" height="9" viewBox="0 0 7 9" style="left:27px;top:4px"><path d="M0 0V9L7 4.5Z" fill="#7e7e7e"/></svg><span class="ic O" style="left:39px"><b>O</b></span><span class="t" style="left:57px"><u>_</u>entity: <span class="m">CCClass {<span class="k">_name</span>: <span class="s">"list"</span>, <span class="k">_objFlags</span>: <span class="n">0</span>}</span></span></div>
<div class="rrow"><span class="ic Ng" style="left:39px"><b>N</b></span><span class="t" style="left:57px"><u>_</u>parent: <span class="m"><span class="g">null</span></span></span></div>
<div class="rrow"><svg width="7" height="9" viewBox="0 0 7 9" style="left:27px;top:4px"><path d="M0 0V9L7 4.5Z" fill="#7e7e7e"/></svg><span class="ic O" style="left:39px"><b>O</b></span><span class="t" style="left:57px">actionManager: <span class="m">ActionManager {<span class="k">retain</span>: function, <span class="k">release</span>: function}</span></span></div>
<div class="rrow"><span class="ic B" style="left:39px"><b>B</b></span><span class="t" style="left:57px">cascadeColor: <span class="m"><span class="k">false</span></span></span></div>
<div class="rrow"><span class="ic B" style="left:39px"><b>B</b></span><span class="t" style="left:57px">cascadeOpacity: <span class="m"><span class="k">true</span></span></span></div>
<div class="rrow"><svg width="7" height="9" viewBox="0 0 7 9" style="left:27px;top:4px"><path d="M0 0V9L7 4.5Z" fill="#7e7e7e"/></svg><span class="ic O" style="left:39px"><b>O</b></span><span class="t" style="left:57px">children: <span class="m">[Node, Node, Node, Node, Node, Node, Node]</span></span></div>
<div class="rrow"><span class="ic N" style="left:39px"><b>N</b></span><span class="t" style="left:57px">childrenCount: <span class="m"><span class="n">18</span></span></span></div>
<div class="rrow"><svg width="7" height="9" viewBox="0 0 7 9" style="left:27px;top:4px"><path d="M0 0V9L7 4.5Z" fill="#7e7e7e"/></svg><span class="ic O" style="left:39px"><b>O</b></span><span class="t" style="left:57px">color: <span class="m">{<span class="k">r</span>: <span class="n">255</span>, <span class="k">g</span>: <span class="n">255</span>, <span class="k">b</span>: <span class="n">255</span>, <span class="k">a</span>: <span class="n">255</span>}</span></span></div></div>
<div id="rtrack" class="abs"><div class="thumb" style="left:3px;top:3px;width:8px;height:476px"></div></div>
<svg width="13" height="13" viewBox="0 0 13 13" style="left:1181px;top:113px"><path d="M6.500 1V12M1 6.500H12" stroke="#3d3d3d" stroke-width="1"/></svg>
<svg width="12" height="14" viewBox="0 0 12 14" style="left:1201px;top:113px"><path d="M.5 2.5H11.5M4 2.5V.5H8V2.5M1.5 2.5L2.2 13.5H9.8L10.5 2.5M4.3 4.5V11.5M6 4.5V11.5M7.7 4.5V11.5" fill="none" stroke="#8e8e8e"/></svg>
<svg width="12" height="14" viewBox="0 0 12 14" style="left:1222px;top:113px"><path d="M6 2.500A5 5 0 1 0 11 7.500" fill="none" stroke="#8e8e8e" stroke-width="1.100"/><path d="M5.500 0L9.300 2.300L5.500 4.800Z" fill="#8e8e8e"/></svg>
<div id="vline1" class="abs"></div><div id="vline2" class="abs"></div>
</div></div></div></body></html>
